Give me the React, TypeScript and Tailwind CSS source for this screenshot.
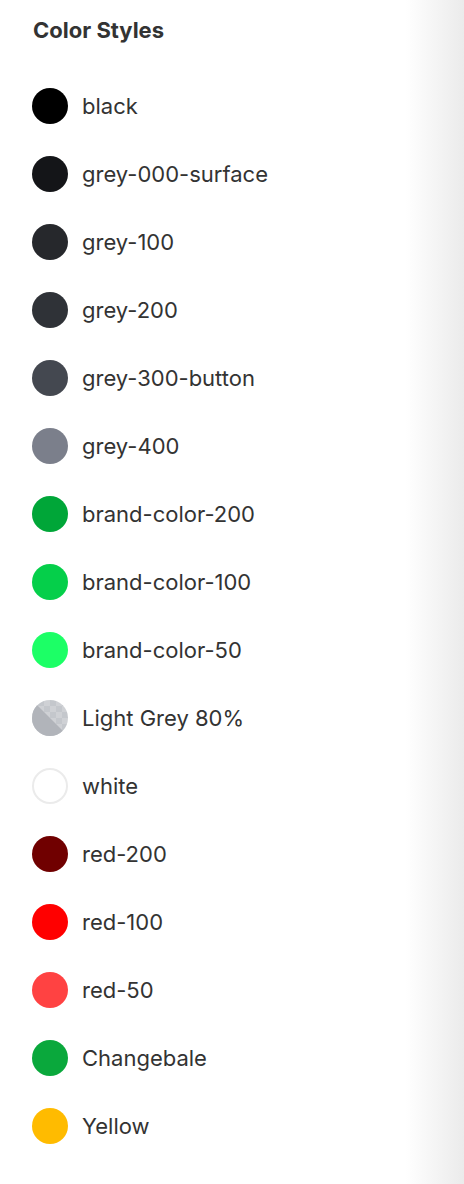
import React from "react";

type Swatch = { name: string; color: string; kind?: "alpha" | "white" };

const swatches: Swatch[] = [
  { name: "black", color: "#000000" },
  { name: "grey-000-surface", color: "#141518" },
  { name: "grey-100", color: "#26282c" },
  { name: "grey-200", color: "#2f3237" },
  { name: "grey-300-button", color: "#444850" },
  { name: "grey-400", color: "#7b7f8b" },
  { name: "brand-color-200", color: "#00a638" },
  { name: "brand-color-100", color: "#05cf4a" },
  { name: "brand-color-50", color: "#1cff66" },
  { name: "Light Grey 80%", color: "#b1b4ba", kind: "alpha" },
  { name: "white", color: "#ffffff", kind: "white" },
  { name: "red-200", color: "#700000" },
  { name: "red-100", color: "#ff0000" },
  { name: "red-50", color: "#ff4242" },
  { name: "Changebale", color: "#0aa83c" },
  { name: "Yellow", color: "#ffbb00" },
];

function Dot({ s }: { s: Swatch }) {
  if (s.kind === "alpha") {
    return (
      <svg width="36" height="36" viewBox="0 0 36 36" className="shrink-0">
        <defs>
          <clipPath id="c">
            <circle cx="18" cy="18" r="18" />
          </clipPath>
          <pattern id="chk" width="12" height="12" patternUnits="userSpaceOnUse">
            <rect width="12" height="12" fill="#c4c7cc" />
            <rect width="6" height="6" fill="#cfd1d5" />
            <rect x="6" y="6" width="6" height="6" fill="#cfd1d5" />
          </pattern>
        </defs>
        <g clipPath="url(#c)">
          <rect width="36" height="36" fill="url(#chk)" />
          <polygon points="0,0 36,36 0,36" fill="#b1b4ba" />
        </g>
      </svg>
    );
  }
  if (s.kind === "white") {
    return <div className="w-9 h-9 shrink-0 rounded-full bg-white border-2 border-[#ebebeb]" />;
  }
  return <div className="w-9 h-9 shrink-0 rounded-full" style={{ backgroundColor: s.color }} />;
}

export default function App() {
  return (
    <div className="flex min-h-screen w-full bg-white" style={{ fontFamily: "Inter, 'Noto Sans', sans-serif" }}>
      <div className="flex-1 pl-8">
        <div className="pt-[17px] mb-[29px] text-[22px] leading-[26px] font-bold text-[#333333] pl-px">
          Color Styles
        </div>
        <div className="flex flex-col">
          {swatches.map((s) => (
            <div key={s.name} className="h-[68px] flex items-center gap-[14px]">
              <Dot s={s} />
              <span className="text-[22px] leading-[26px] text-[#333333]">{s.name}</span>
            </div>
          ))}
        </div>
      </div>
      <div className="w-[58px] shrink-0 bg-gradient-to-r from-white to-[#ebebeb]" />
    </div>
  );
}
